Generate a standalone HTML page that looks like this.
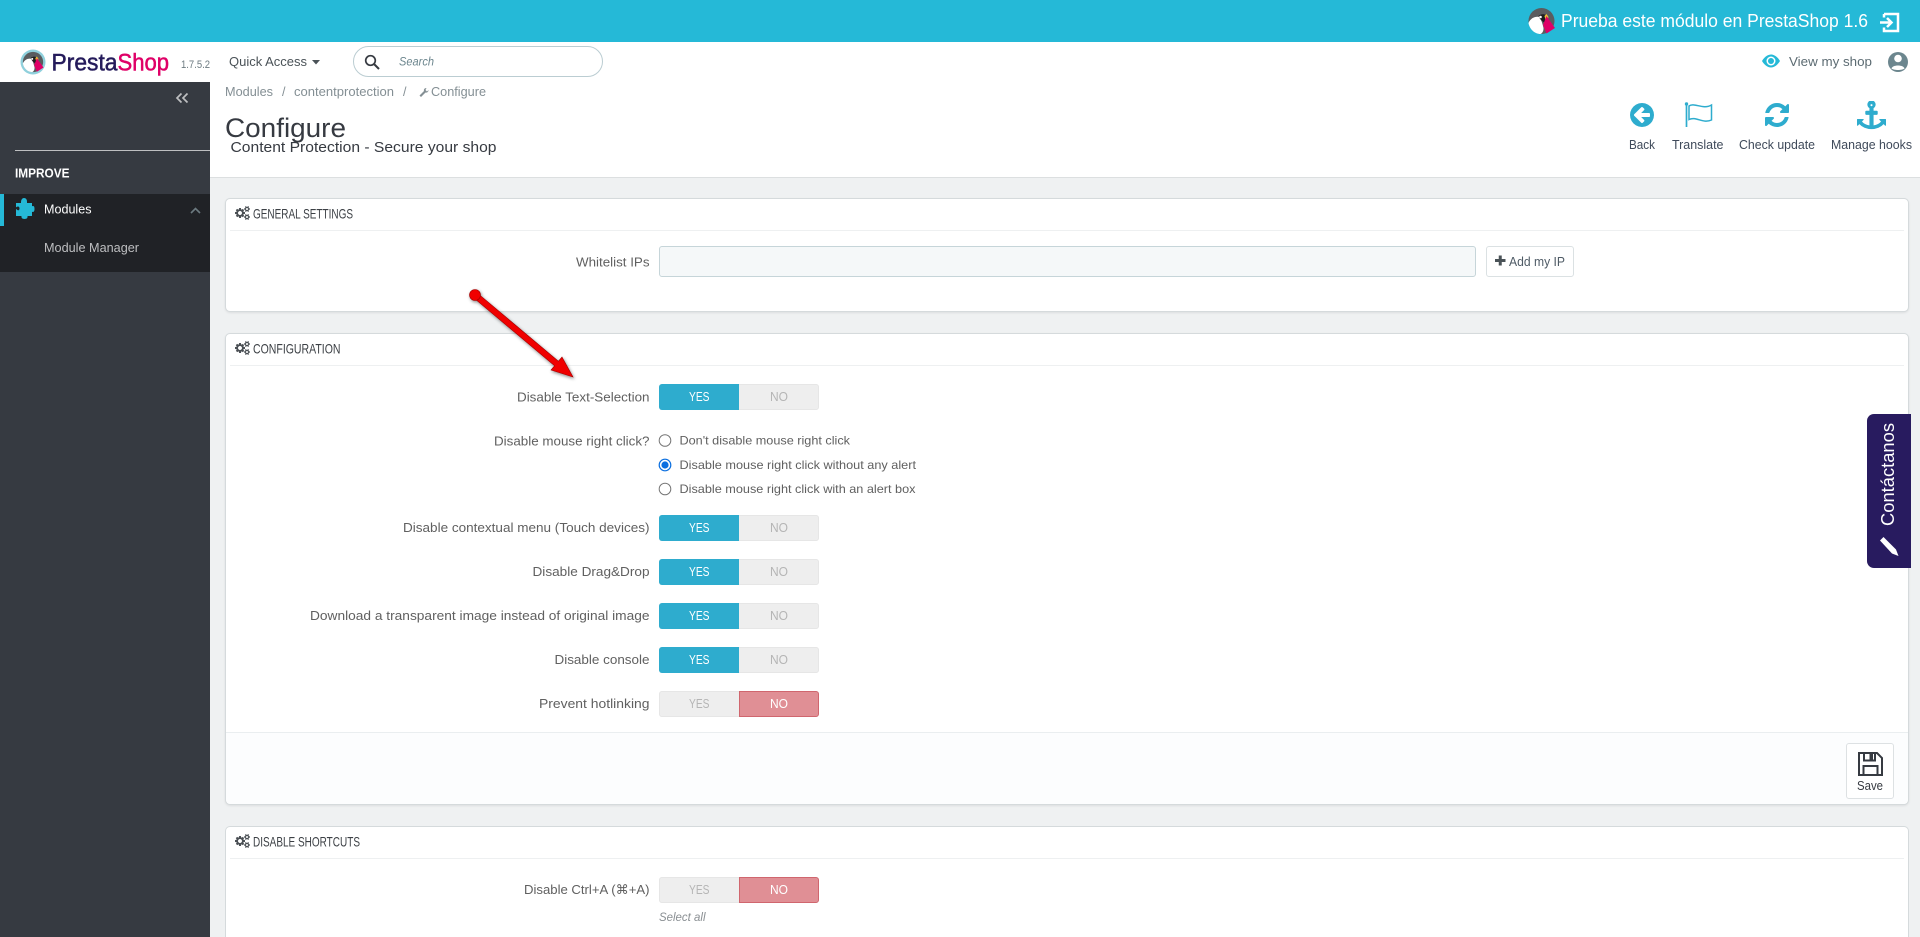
<!DOCTYPE html>
<html lang="en">
<head>
<meta charset="utf-8">
<title>Configure - Content Protection</title>
<style>
html,body{margin:0;padding:0;width:1920px;height:937px;overflow:hidden;background:#eff1f2;font-family:"Liberation Sans",sans-serif}
#w{position:relative;width:1920px;height:937px;overflow:hidden;background:#eff1f2}
.b{position:absolute;box-sizing:border-box}
.panel{background:#fff;border:1px solid #d5dadc;border-radius:5px;box-shadow:0 1px 2px rgba(0,0,0,.08)}
.sw{position:absolute;left:659px;width:160px;height:26px;border-radius:3px;background:#eee;box-shadow:inset 0 0 0 1px #e6e6e6}
.sw i{position:absolute;top:0;width:80px;height:26px;display:block;box-sizing:border-box}
.sw .y{left:0;background:#2eacce;border-radius:3px 0 0 3px}
.sw .n{right:0;background:#e08f95;border:1px solid #d0666e;border-radius:0 3px 3px 0}
svg.o{position:absolute;left:0;top:0}
text{font-family:"Liberation Sans",sans-serif}
.l{font-size:13px;fill:#606060}
.h{font-size:14px;fill:#3c4045}
.ty{font-size:13px;fill:#fff}
.tg{font-size:13px;fill:#b5b5b5}
.tb{font-size:12.5px;fill:#3f4a5a}
.bc{font-size:12.5px;fill:#848f94}
</style>
</head>
<body>
<div id="w">
<div class="b" style="left:0;top:0;width:1920px;height:42px;background:#25b9d7"></div>
<div class="b" style="left:0;top:42px;width:1920px;height:40px;background:#fff"></div>
<div class="b" style="left:210px;top:82px;width:1710px;height:96px;background:#fff;border-bottom:1px solid #dcdfe0"></div>
<div class="b" style="left:353px;top:46px;width:250px;height:31px;border:1px solid #bbcdd2;border-radius:16px;background:#fff"></div>

<div class="b" style="left:0;top:82px;width:210px;height:855px;background:#363a41"></div>
<div class="b" style="left:15px;top:150px;width:195px;height:1px;background:#bebfc1"></div>
<div class="b" style="left:0;top:194px;width:210px;height:78px;background:#202226"></div>
<div class="b" style="left:0;top:194px;width:4px;height:32px;background:#25b9d7"></div>

<div class="b panel" style="left:225px;top:198px;width:1684px;height:114px"></div>
<div class="b" style="left:230px;top:230px;width:1674px;height:1px;background:#eef0f1"></div>
<div class="b" style="left:659px;top:246px;width:817px;height:31px;background:#f5f8f9;border:1px solid #c6d5d9;border-radius:3px"></div>
<div class="b" style="left:1486px;top:246px;width:88px;height:31px;background:#fff;border:1px solid #dbe1e3;border-radius:3px"></div>

<div class="b panel" style="left:225px;top:333px;width:1684px;height:472px"></div>
<div class="b" style="left:230px;top:365px;width:1674px;height:1px;background:#eef0f1"></div>
<div class="b" style="left:226px;top:732px;width:1682px;height:72px;background:#fcfdfe;border-top:1px solid #eaeef0;border-radius:0 0 5px 5px"></div>
<div class="b" style="left:1846px;top:743px;width:48px;height:56px;background:#fff;border:1px solid #dde1e3;border-radius:3px"></div>

<div class="sw" style="top:384px"><i class="y"></i></div>
<div class="sw" style="top:515px"><i class="y"></i></div>
<div class="sw" style="top:559px"><i class="y"></i></div>
<div class="sw" style="top:603px"><i class="y"></i></div>
<div class="sw" style="top:647px"><i class="y"></i></div>
<div class="sw" style="top:691px"><i class="n"></i></div>

<div class="b panel" style="left:225px;top:826px;width:1684px;height:105px;border-radius:5px 5px 0 0;height:111px;border-bottom:0;box-shadow:none"></div>
<div class="b" style="left:230px;top:858px;width:1674px;height:1px;background:#eef0f1"></div>
<div class="sw" style="top:877px"><i class="n"></i></div>

<div class="b" style="left:1867px;top:414px;width:44px;height:154px;background:#281b5f;border-radius:7px 0 0 7px"></div>

<svg class="o" width="1920" height="937" viewBox="0 0 1920 937" xmlns="http://www.w3.org/2000/svg">
<defs>
<symbol id="cogs" viewBox="0 0 1920 1792"><path d="M896 896q0-106-75-181t-181-75-181 75-75 181 75 181 181 75 181-75 75-181zm768 512q0-52-38-90t-90-38-90 38-38 90q0 53 37.5 90.5t90.5 37.5 90.5-37.5 37.5-90.5zm0-1024q0-52-38-90t-90-38-90 38-38 90q0 53 37.5 90.5t90.5 37.5 90.5-37.5 37.5-90.5zm-384 421v185q0 10-7 19.5t-16 10.5l-155 24q-11 35-32 76 34 48 90 115 7 11 7 20 0 12-7 19-23 30-82.5 89.5t-78.5 59.5q-11 0-21-7l-115-90q-37 19-77 31-11 108-23 155-7 24-30 24h-186q-11 0-20-7.5t-10-17.5l-23-153q-34-10-75-31l-118 89q-7 7-20 7-11 0-21-8-144-133-144-160 0-9 7-19 10-14 41-53t47-61q-23-44-35-82l-152-24q-10-1-17-9.5t-7-19.5v-185q0-10 7-19.5t16-10.5l155-24q11-35 32-76-34-48-90-115-7-11-7-20 0-12 7-20 22-30 82-89t79-59q11 0 21 7l115 90q34-18 77-32 11-108 23-154 7-24 30-24h186q11 0 20 7.5t10 17.5l23 153q34 10 75 31l118-89q8-7 20-7 11 0 21 8 144 133 144 160 0 8-7 19-12 16-42 54t-45 60q23 48 34 82l152 23q10 2 17 10.5t7 19.5zm640 533v140q0 16-149 31-12 27-30 52 51 113 51 138 0 4-4 7-122 71-124 71-8 0-46-47t-52-68q-20 2-30 2t-30-2q-14 21-52 68t-46 47q-2 0-124-71-4-3-4-7 0-25 51-138-18-25-30-52-149-15-149-31v-140q0-16 149-31 13-29 30-52-51-113-51-138 0-4 4-7 4-2 35-20t59-34 30-16q8 0 46 46.5t52 67.5q20-2 30-2t30 2q51-71 92-112l6-2q4 0 124 70 4 3 4 7 0 25-51 138 17 23 30 52 149 15 149 31zm0-1024v140q0 16-149 31-12 27-30 52 51 113 51 138 0 4-4 7-122 71-124 71-8 0-46-47t-52-68q-20 2-30 2t-30-2q-14 21-52 68t-46 47q-2 0-124-71-4-3-4-7 0-25 51-138-18-25-30-52-149-15-149-31v-140q0-16 149-31 13-29 30-52-51-113-51-138 0-4 4-7 4-2 35-20t59-34 30-16q8 0 46 46.5t52 67.5q20-2 30-2t30 2q51-71 92-112l6-2q4 0 124 70 4 3 4 7 0 25-51 138 17 23 30 52 149 15 149 31z"/></symbol>
<g id="peng">
<circle cx="0" cy="0" r="13" fill="#5a5c5f"/>
<path d="M-13 2C-11 -3 -6 -5 -2 -4C0 -1 1 3 2 7C2 10 1 12 -1 13C-7 13 -12 8 -13 2Z" fill="#fff"/>
<path d="M-3 -5C0 -8 5 -7 6 -4L4 2C1 1 -2 -2 -3 -5Z" fill="#1d1d1f"/>
<path d="M3 -5L5 -7L7 -4L5 3Z" fill="#f2c230"/>
<path d="M5 -5L13.500 7L5 12.500L1.500 4Z" fill="#df0067"/>
<circle cx="-1" cy="-4" r="1.300" fill="#fff"/>
</g>
<filter id="sh" x="-10%" y="-10%" width="130%" height="130%"><feDropShadow dx="1" dy="1.500" stdDeviation="1.500" flood-color="#000" flood-opacity=".45"/></filter>
</defs>

<!-- top banner -->
<use href="#peng" transform="translate(1541.500 21)"/>
<text x="1561" y="27" font-size="18" fill="#fff" textLength="307" lengthAdjust="spacingAndGlyphs">Prueba este módulo en PrestaShop 1.6</text>
<path d="M1884 14H1898V31H1884V27.500M1884 17.500V14M1880 22.500H1891M1887 18L1891.500 22.500L1887 27" fill="none" stroke="#fff" stroke-width="2.500"/>

<!-- logo -->
<g transform="translate(33 62)"><circle r="12.500" fill="#8fd0dc"/><use href="#peng" transform="scale(.78)"/></g>
<text x="51.500" y="70.500" font-size="24" fill="#251b5b" stroke="#251b5b" stroke-width=".5" textLength="66" lengthAdjust="spacingAndGlyphs">Presta</text>
<text x="117.500" y="70.500" font-size="24" fill="#df0067" stroke="#df0067" stroke-width=".5" textLength="51.500" lengthAdjust="spacingAndGlyphs">Shop</text>
<text x="181" y="68" font-size="11" fill="#6c7a80" textLength="29" lengthAdjust="spacingAndGlyphs">1.7.5.2</text>
<text x="229" y="66" font-size="13" fill="#4a5257" textLength="78" lengthAdjust="spacingAndGlyphs">Quick Access</text>
<path d="M312 60H320L316 64.500Z" fill="#4a5257"/>
<circle cx="370.500" cy="60.500" r="4.800" fill="none" stroke="#363a41" stroke-width="1.700"/>
<path d="M374 64L379 69" stroke="#363a41" stroke-width="2"/>
<text x="399" y="65.500" font-size="12" font-style="italic" fill="#6c868e" textLength="35" lengthAdjust="spacingAndGlyphs">Search</text>

<!-- header right -->
<path d="M1762 61C1765 56 1768.500 54.500 1771 54.500C1773.500 54.500 1777 56 1780 61C1777 66 1773.500 67.500 1771 67.500C1768.500 67.500 1765 66 1762 61Z" fill="#25b9d7"/>
<circle cx="1771" cy="61" r="4.500" fill="#fff"/><circle cx="1771" cy="61" r="3" fill="#25b9d7"/>
<text x="1789" y="66" font-size="13" fill="#5c6b72" textLength="83" lengthAdjust="spacingAndGlyphs">View my shop</text>
<circle cx="1898" cy="62" r="10" fill="#6c868e"/>
<circle cx="1898" cy="58.500" r="3.800" fill="#fff"/>
<path d="M1891.500 68.500C1892.500 64.500 1903.500 64.500 1904.500 68.500C1902 70.500 1894 70.500 1891.500 68.500Z" fill="#fff"/>

<!-- sidebar -->
<path d="M181.500 93.500L177 98L181.500 102.500M187.500 93.500L183 98L187.500 102.500" fill="none" stroke="#bebfc1" stroke-width="1.700"/>
<text x="15" y="177.500" font-size="12.500" font-weight="700" fill="#fff" textLength="54.500" lengthAdjust="spacingAndGlyphs">IMPROVE</text>
<path transform="translate(0.500 2.500)" d="M21 199.500C21 197.500 22 196 23.500 196C25.500 196 26 197.500 26 199.500V201H31V204.500C33 203.500 33.500 204 33.500 206.500C33.500 209 32.500 209.500 31 208.500V213H26.500C27 215.500 26 216 24 216C22 216 21 215.500 21.500 213H16V207.500C17.500 209 19.500 208.500 19.500 206C19.500 203.500 17.500 203 16 204V201H21Z" fill="#25b9d7" stroke="#25b9d7" stroke-width="1"/>
<text x="44" y="213.500" font-size="13" fill="#fff" textLength="47.500" lengthAdjust="spacingAndGlyphs">Modules</text>
<path d="M191 213L195.500 208.500L200 213" fill="none" stroke="#6c7a80" stroke-width="1.600"/>
<text x="44" y="252" font-size="13" fill="#bebfc1" textLength="95" lengthAdjust="spacingAndGlyphs">Module Manager</text>

<!-- breadcrumb & title -->
<text class="bc" x="225" y="96" textLength="48" lengthAdjust="spacingAndGlyphs">Modules</text>
<text class="bc" x="282" y="96">/</text>
<text class="bc" x="294" y="96" textLength="100" lengthAdjust="spacingAndGlyphs">contentprotection</text>
<text class="bc" x="403" y="96">/</text>
<path d="M426.500 88C424.500 88 423.500 89.500 424 91L419.500 95.500L421 97L425.500 92.500C427.500 93 428.500 91.500 428.500 90L427 91.500L425.500 90Z" fill="#848f94"/>
<text class="bc" x="431" y="96" textLength="55" lengthAdjust="spacingAndGlyphs">Configure</text>
<text x="225" y="137" font-size="27" fill="#363a41" textLength="121" lengthAdjust="spacingAndGlyphs">Configure</text>
<text x="230.500" y="152" font-size="15" fill="#363a41" textLength="266" lengthAdjust="spacingAndGlyphs">Content Protection - Secure your shop</text>

<!-- toolbar -->
<svg x="1630" y="103" width="24" height="24" viewBox="128 128 1536 1536"><path fill="#2eacce" d="M1408 960v-128q0-26-18.500-45t-45.500-19h-502l189-189q19-19 19-45t-19-45l-91-91q-18-18-45-18t-45 18l-362 362-91 91q-18 18-18 45t18 45l91 91 362 362q18 18 45 18t45-18l91-91q18-18 18-45t-18-45l-189-189h502q26 0 45-19t19-45zm256-64q0 209-103 385.500t-279.500 279.500-385.500 103-385.500-103-279.500-279.500-103-385.500 103-385.500 279.500-279.500 385.500-103 385.500 103 279.500 279.500 103 385.500z"/></svg>
<circle cx="1686.500" cy="104" r="1.700" fill="#2eacce"/>
<path d="M1686.500 104V127" stroke="#2eacce" stroke-width="1.700"/>
<path d="M1689 106C1694 102 1703 110 1711.500 105V120C1703 124 1696 116 1689 119.500Z" fill="#fff" stroke="#2eacce" stroke-width="1.500"/>
<svg x="1765" y="103" width="24" height="24" viewBox="128 128 1536 1536"><path fill="#2eacce" d="M1639 1056q0 5-1 7-64 268-268 434.500t-478 166.500q-146 0-282.500-55t-243.500-157l-129 129q-19 19-45 19t-45-19-19-45v-448q0-26 19-45t45-19h448q26 0 45 19t19 45-19 45l-137 137q71 66 161 102t187 36q134 0 250-65t186-179q11-17 53-117 8-23 30-23h192q13 0 22.500 9.500t9.500 22.500zm25-800v448q0 26-19 45t-45 19h-448q-26 0-45-19t-19-45 19-45l138-138q-148-137-349-137-134 0-250 65t-186 179q-11 17-53 117-8 23-30 23h-199q-13 0-22.500-9.500t-9.500-22.500v-7q65-268 270-434.500t480-166.500q146 0 284 55.500t245 156.500l130-129q19-19 45-19t45 19 19 45z"/></svg>
<svg x="1857" y="101" width="29" height="29" viewBox="0 0 1792 1792"><path fill="#2eacce" d="M960 256q0-26-19-45t-45-19-45 19-19 45 19 45 45 19 45-19 19-45zm832 888v352q0 22-20 30-8 2-12 2-12 0-23-9l-93-93q-119 143-318.500 226.500t-429.500 83.500-429.500-83.500-318.500-226.500l-93 93q-9 9-23 9-4 0-12-2-20-8-20-30v-352q0-14 9-23t23-9h352q22 0 30 20 8 19-7 35l-100 100q67 91 189.500 153.500t271.500 82.500v-647h-192q-26 0-45-19t-19-45v-128q0-26 19-45t45-19h192v-163q-58-34-93-92.500t-35-128.500q0-106 75-181t181-75 181 75 75 181q0 70-35 128.500t-93 92.500v163h192q26 0 45 19t19 45v128q0 26-19 45t-45 19h-192v647q149-20 271.500-82.500t189.500-153.500l-100-100q-15-16-7-35 8-20 30-20h352q14 0 23 9t9 23z"/></svg>
<text class="tb" x="1629" y="149" textLength="26" lengthAdjust="spacingAndGlyphs">Back</text>
<text class="tb" x="1672" y="149" textLength="51.500" lengthAdjust="spacingAndGlyphs">Translate</text>
<text class="tb" x="1739" y="149" textLength="76" lengthAdjust="spacingAndGlyphs">Check update</text>
<text class="tb" x="1831" y="149" textLength="81" lengthAdjust="spacingAndGlyphs">Manage hooks</text>

<!-- panel headings -->
<use href="#cogs" x="235" y="206" width="15" height="14" fill="#4a4f54"/>
<text class="h" x="253" y="218.500" textLength="100" lengthAdjust="spacingAndGlyphs">GENERAL SETTINGS</text>
<use href="#cogs" x="235" y="341" width="15" height="14" fill="#4a4f54"/>
<text class="h" x="253" y="353.500" textLength="87.500" lengthAdjust="spacingAndGlyphs">CONFIGURATION</text>
<use href="#cogs" x="235" y="834" width="15" height="14" fill="#4a4f54"/>
<text class="h" x="253" y="846.500" textLength="107" lengthAdjust="spacingAndGlyphs">DISABLE SHORTCUTS</text>

<!-- labels -->
<text class="l" x="576" y="266.500" textLength="73.500" lengthAdjust="spacingAndGlyphs">Whitelist IPs</text>
<text class="l" x="517" y="401.500" textLength="132.500" lengthAdjust="spacingAndGlyphs">Disable Text-Selection</text>
<text class="l" x="494" y="445.500" textLength="155.500" lengthAdjust="spacingAndGlyphs">Disable mouse right click?</text>
<text class="l" x="403" y="532" textLength="246.500" lengthAdjust="spacingAndGlyphs">Disable contextual menu (Touch devices)</text>
<text class="l" x="532.500" y="576" textLength="117" lengthAdjust="spacingAndGlyphs">Disable Drag&amp;Drop</text>
<text class="l" x="310" y="620" textLength="339.500" lengthAdjust="spacingAndGlyphs">Download a transparent image instead of original image</text>
<text class="l" x="554.500" y="664" textLength="95" lengthAdjust="spacingAndGlyphs">Disable console</text>
<text class="l" x="539" y="708" textLength="110.500" lengthAdjust="spacingAndGlyphs">Prevent hotlinking</text>
<text class="l" x="524" y="894" textLength="125.500" lengthAdjust="spacingAndGlyphs">Disable Ctrl+A (⌘+A)</text>

<!-- radios -->
<circle cx="665" cy="440.500" r="5.800" fill="#fff" stroke="#767676" stroke-width="1"/>
<circle cx="665" cy="465" r="5.800" fill="#fff" stroke="#0b6fe0" stroke-width="1.200"/><circle cx="665" cy="465" r="3.600" fill="#0b6fe0"/>
<circle cx="665" cy="489" r="5.800" fill="#fff" stroke="#767676" stroke-width="1"/>
<text x="679.500" y="444.500" font-size="12" fill="#606060" textLength="170.500" lengthAdjust="spacingAndGlyphs">Don't disable mouse right click</text>
<text x="679.500" y="469" font-size="12" fill="#606060" textLength="236.500" lengthAdjust="spacingAndGlyphs">Disable mouse right click without any alert</text>
<text x="679.500" y="493" font-size="12" fill="#606060" textLength="236" lengthAdjust="spacingAndGlyphs">Disable mouse right click with an alert box</text>

<!-- switch labels -->
<g text-anchor="start">
<text class="ty" x="689" y="401" textLength="20.500" lengthAdjust="spacingAndGlyphs">YES</text>
<text class="tg" x="770" y="401" textLength="18" lengthAdjust="spacingAndGlyphs">NO</text>
<text class="ty" x="689" y="532" textLength="20.500" lengthAdjust="spacingAndGlyphs">YES</text>
<text class="tg" x="770" y="532" textLength="18" lengthAdjust="spacingAndGlyphs">NO</text>
<text class="ty" x="689" y="576" textLength="20.500" lengthAdjust="spacingAndGlyphs">YES</text>
<text class="tg" x="770" y="576" textLength="18" lengthAdjust="spacingAndGlyphs">NO</text>
<text class="ty" x="689" y="620" textLength="20.500" lengthAdjust="spacingAndGlyphs">YES</text>
<text class="tg" x="770" y="620" textLength="18" lengthAdjust="spacingAndGlyphs">NO</text>
<text class="ty" x="689" y="664" textLength="20.500" lengthAdjust="spacingAndGlyphs">YES</text>
<text class="tg" x="770" y="664" textLength="18" lengthAdjust="spacingAndGlyphs">NO</text>
<text class="tg" x="689" y="708" textLength="20.500" lengthAdjust="spacingAndGlyphs">YES</text>
<text class="ty" x="770" y="708" textLength="18" lengthAdjust="spacingAndGlyphs">NO</text>
<text class="tg" x="689" y="894" textLength="20.500" lengthAdjust="spacingAndGlyphs">YES</text>
<text class="ty" x="770" y="894" textLength="18" lengthAdjust="spacingAndGlyphs">NO</text>
</g>
<text x="659" y="921" font-size="12" font-style="italic" fill="#8a8f93" textLength="46.500" lengthAdjust="spacingAndGlyphs">Select all</text>

<!-- add my ip -->
<path d="M1495 260.500H1505.500M1500.250 255.500V265.500" stroke="#4a5257" stroke-width="3"/>
<text x="1509" y="266" font-size="13" fill="#4f5b66" textLength="56" lengthAdjust="spacingAndGlyphs">Add my IP</text>

<!-- save -->
<path d="M1859 753H1877L1882 758V775H1859Z" fill="#fff" stroke="#363a41" stroke-width="2"/>
<path d="M1864 753V760.500H1875V753M1863.500 775V766H1877.500V775" fill="none" stroke="#363a41" stroke-width="2"/>
<path d="M1869.500 754V759.500H1873V754Z" fill="#363a41"/>
<text x="1857" y="790" font-size="12.500" fill="#363a41" textLength="26" lengthAdjust="spacingAndGlyphs">Save</text>

<!-- contact tab -->
<text transform="translate(1894 526) rotate(-90)" font-size="18" fill="#fff" textLength="103" lengthAdjust="spacingAndGlyphs">Contáctanos</text>
<path d="M1880 540.500L1883.500 537L1896 549.500L1898.500 556L1892 553.500Z" fill="#fff"/>

<!-- red arrow -->
<g filter="url(#sh)">
<path d="M476.900 292.700L558.400 361.200L562 357L573 377L551 370L554.600 365.800L473.100 297.300Z" fill="#f00000" stroke="#a00000" stroke-width=".6"/>
<circle cx="475" cy="295" r="5.500" fill="#f00000" stroke="#a00000" stroke-width=".6"/>
</g>
</svg>
</div>
</body>
</html>
